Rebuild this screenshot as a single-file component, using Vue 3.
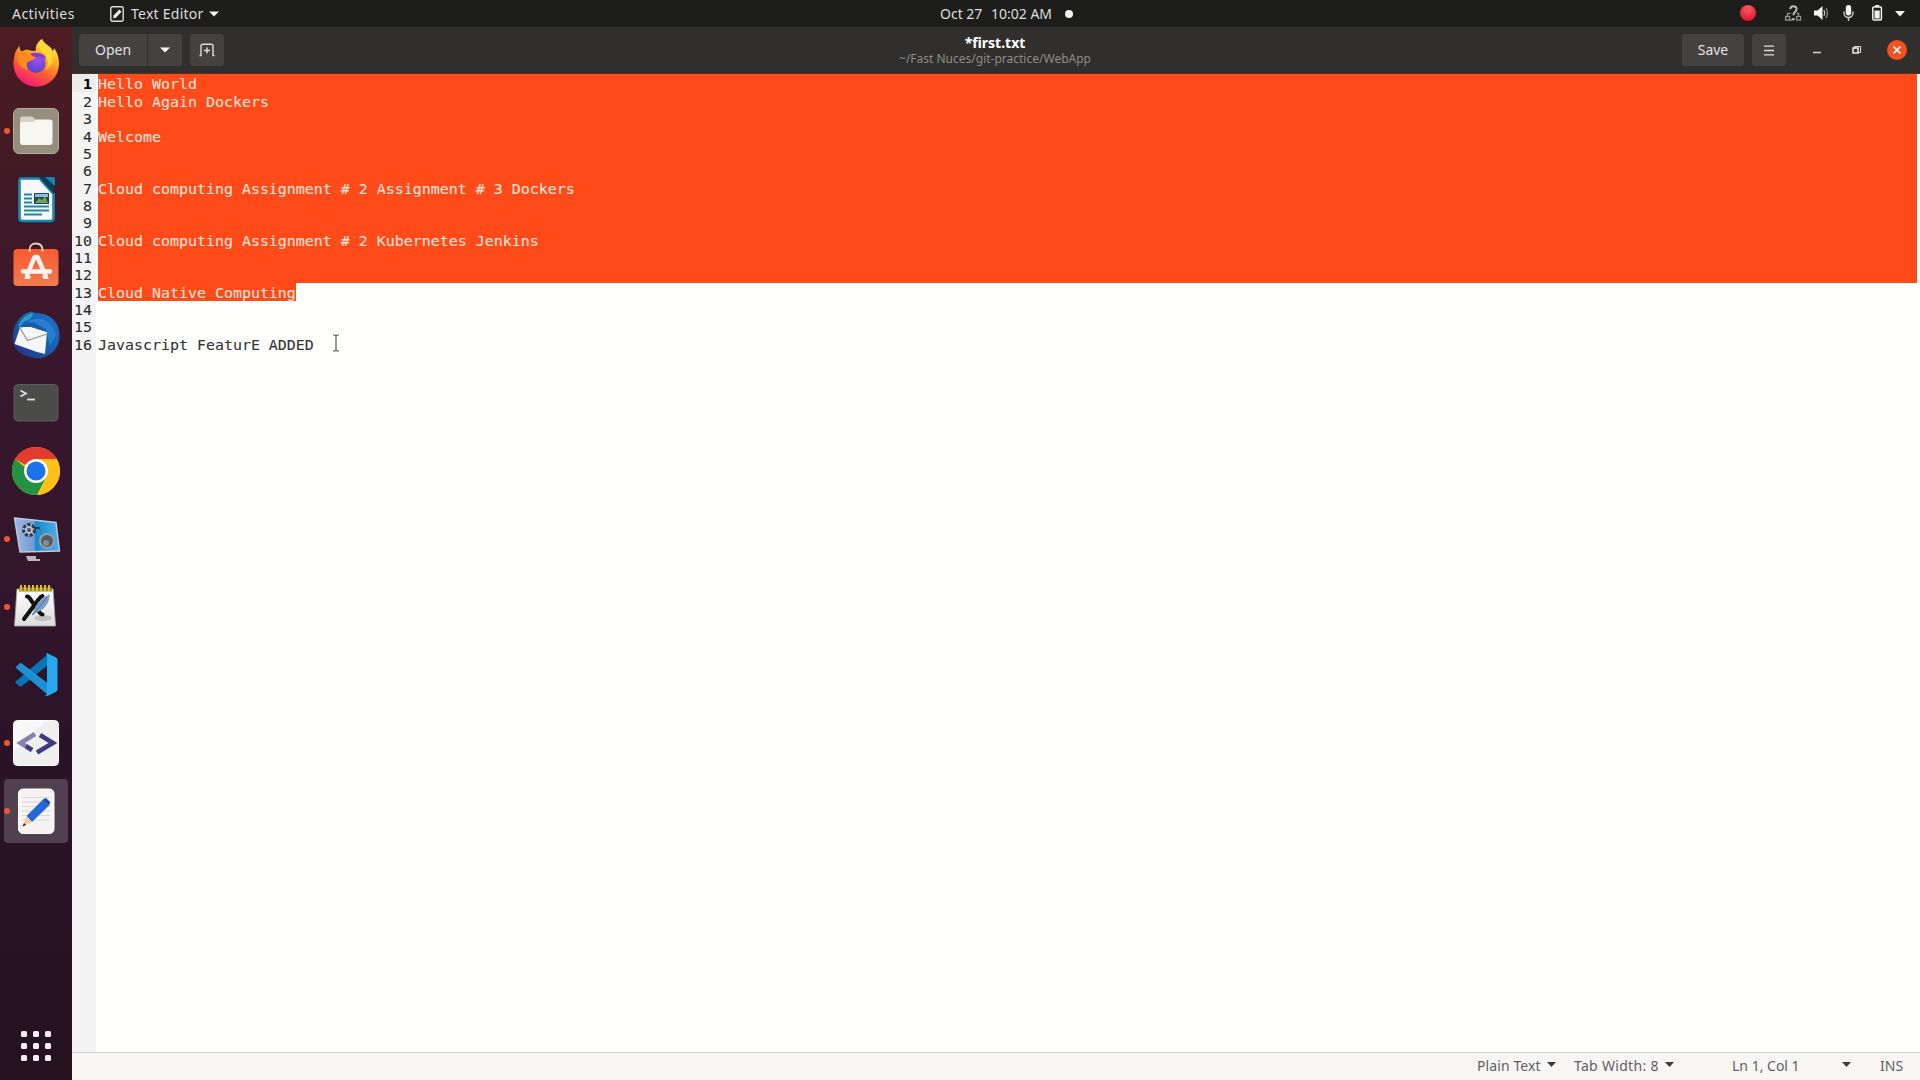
<script setup>
const lines = [
  { t: 'Hello World', s: true },
  { t: 'Hello Again Dockers', s: true },
  { t: '', s: true },
  { t: 'Welcome', s: true },
  { t: '', s: true },
  { t: '', s: true },
  { t: 'Cloud computing Assignment # 2 Assignment # 3 Dockers', s: true },
  { t: '', s: true },
  { t: '', s: true },
  { t: 'Cloud computing Assignment # 2 Kubernetes Jenkins', s: true },
  { t: '', s: true },
  { t: '', s: true },
  { t: 'Cloud Native Computing', s: false, part: true },
  { t: '' },
  { t: '' },
  { t: 'Javascript FeaturE ADDED' },
]
const spots = [0, 1, 2, 3, 4, 5, 6, 7, 8]
</script>

<template>
  <div class="desktop">
    <header class="topbar">
      <div class="top-left">
        <span class="activities">Activities</span>
        <svg class="app-icon" width="14" height="16" viewBox="0 0 14 16"><rect x=".8" y=".8" width="12.4" height="14.4" rx="1.6" fill="none" stroke="#ddd" stroke-width="1.4" /><path d="M3 12.4l.8-3.2 5.5-5.6 2.2 2.2-5.4 5.6z" fill="#eee" /></svg>
        <span class="app-name">Text Editor</span>
        <svg class="caret" width="10" height="6" viewBox="0 0 10 6"><path d="M0 .4h10L5 5.6z" fill="#eee" /></svg>
      </div>
      <div class="clock"><span class="date">Oct 27</span><span class="time">10:02 AM</span><i class="notify"></i></div>
      <div class="tray">
        <svg width="172" height="27" viewBox="0 0 172 27">
          <defs><radialGradient id="rec" cx=".5" cy=".25" r=".8"><stop offset="0" stop-color="#ff5a62" /><stop offset="1" stop-color="#d9102b" /></radialGradient></defs>
          <circle cx="8" cy="13" r="8" fill="url(#rec)" />
          <g fill="none" stroke="#8f8f8d" stroke-width="1.3"><rect x="45.6" y="16.5" width="4" height="3.6" /><rect x="56.6" y="16.5" width="4" height="3.6" /><path d="M47.5 16.5v-3h3M58.6 16.5v-3h-2M50 20h2" /></g>
          <path d="M50.3 9.2c0-4 6.3-4 6.3-.2 0 2.8-3.2 2.8-3.2 6.2" fill="none" stroke="#bbb" stroke-width="2" /><circle cx="53.3" cy="19.2" r="1.3" fill="#bbb" />
          <path d="M74 10.5h3.6l4.9-4.6v14.2l-4.9-4.600H74z" fill="#f3f3f3" />
          <g fill="none" stroke="#c9c9c9" stroke-width="1.3"><path d="M84 10.2q1.6 2.8 0 5.6" /><path d="M86 8q2.8 5 0 10" stroke="#888" /></g>
          <rect x="105.8" y="5" width="5.4" height="10.5" rx="2.7" fill="#f3f3f3" /><path d="M104 11.5v1.5a4.500 4.500 0 0 0 9 0v-1.500M108.500 17.500V21" fill="none" stroke="#ccc" stroke-width="1.4" />
          <rect x="132.8" y="7" width="8.6" height="13" rx="1" fill="none" stroke="#eee" stroke-width="1.5" /><rect x="135" y="5" width="4.2" height="2" fill="#eee" /><rect x="134.5" y="10.5" width="5.2" height="8" fill="#eee" />
          <path d="M155 11h10l-5 5.4z" fill="#eee" />
        </svg>
      </div>
    </header>

    <div class="body">
      <nav class="dock">
        <div class="cell">
          <svg viewBox="0 0 48 48"><defs>
            <linearGradient id="fx" x1=".8" y1="0" x2=".3" y2="1"><stop offset="0" stop-color="#fff044" /><stop offset=".35" stop-color="#ffb01f" /><stop offset=".65" stop-color="#ff5a35" /><stop offset="1" stop-color="#f0157e" /></linearGradient>
            <radialGradient id="fp" cx=".6" cy=".3" r=".8"><stop offset="0" stop-color="#a04df0" /><stop offset="1" stop-color="#4a46c8" /></radialGradient></defs>
            <path d="M1.500 25C1.500 17 3.500 11 7.500 7c0 3 1 5 2.500 5.500C13.500 9.500 17.500 11 20 12c2 0 3.500-.2 4-1C23 6 27 2 30 0c2 5 8 6 11 12 0 0 1-1.500 1-3 4 5 5 11 5 16a22.700 22.700 0 0 1-45.500 0z" fill="url(#fx)" />
            <circle cx="24" cy="24.500" r="9.500" fill="url(#fp)" />
            <path d="M6 13c4-2 10 1 13 3 2 2 5 1 5 2-1 3-5 3-8 5-2 1-2 5 0 8-5-1-10-5-11-11z" fill="#ff8a1d" />
            <path d="M18 15c4-2 11-2 15 2l1 4c-3-4-7-4-10-3-2 0-4-2-6-3z" fill="#8638db" />
            <path d="M30 0c-4 5-3 10 1 14 5 4 7 11 2 17 7-3 9-10 7-17C37 8 32 5 30 0z" fill="#ffdc37" opacity=".8" />
          </svg>
        </div>
        <div class="cell"><i class="run"></i>
          <svg viewBox="0 0 48 48"><rect x="1.500" y="1.500" width="45" height="45" rx="5.500" fill="#958e7d" stroke="#b3ac9d" /><path d="M8 12q0-2.500 2.500-2.500h9q1.500 0 2.500 1.500l1.500 2H38v6H8z" fill="#d8d0c6" /><path d="M8 17q0-2 2-2h11l3-2.500h14q2.500 0 2.500 2.500v20q0 3-3 3H11q-3 0-3-3z" fill="#f8f6f0" /></svg>
        </div>
        <div class="cell">
          <svg viewBox="0 0 48 48"><path d="M9 3.500h18.500L41.500 19v24q0 3-3 3h-28q-3 0-3-3V6q0-2.500 1.500-2.500z" fill="#f6f8f9" stroke="#1688b1" stroke-width="2.600" /><path d="M27 2h11l4 4v13z" fill="#0b3d56" /><path d="M33 2h7.500Q43 2 43 5v6z" fill="#1787b0" /><g stroke="#2187ad" stroke-width="2"><path d="M12 19.500h8M12 23.500h8M12 27.500h8M12 31.500h25M12 35.500h25M12 39.500h18" /></g><rect x="22" y="18" width="15" height="11" fill="#1b4660" /><path d="M23 28l4-5 3 2 3-4 3 7z" fill="#74a24a" /><path d="M23 19h13v3H23z" fill="#8bbdda" /></svg>
        </div>
        <div class="cell">
          <svg viewBox="0 0 48 48"><defs><linearGradient id="sw" x1="0" x2="0" y1="0" y2="1"><stop offset="0" stop-color="#fb5a31" /><stop offset="1" stop-color="#f17a50" /></linearGradient></defs><rect x="1.500" y="6" width="45" height="37" rx="4" fill="url(#sw)" /><path d="M17.500 9V7.500q0-7 6.500-7t6.500 7V9" fill="none" stroke="#ded4c4" stroke-width="1.800" /><path d="M14.500 34L22.500 14h3L34 34" fill="none" stroke="#fff4ed" stroke-width="4.500" stroke-linejoin="bevel" /><path d="M11 28.500h27" stroke="#fff4ed" stroke-width="4.500" stroke-linecap="round" /><path d="M12 36h6l1-3h-5zM30 33l1.500 3H37l-2-3z" fill="#fff4ed" /></svg>
        </div>
        <div class="cell">
          <svg viewBox="0 0 48 48"><defs><linearGradient id="tb" x1="1" x2="0" y1="0" y2="1"><stop offset="0" stop-color="#1f72d2" /><stop offset=".5" stop-color="#185dac" /><stop offset="1" stop-color="#292979" /></linearGradient></defs><path d="M2 18C5 7 14 1 20 .5l3 1.500C38 2 47.500 11 47.500 24.500 47.500 37 39 45 29 47.500 17 47 7 44 3 36 0 30 .5 23 2 18z" fill="url(#tb)" /><path d="M7 13q5-9 13-11l1 2-4 5q-7 1-10 9z" fill="#279dc4" /><path d="M15 11C26 3 40 9 44 24l-6 11-4-17-11-6z" fill="#267ed1" /><path d="M8 16.500l10-1 17 5.500-2 22-8-2L2.500 33z" fill="#f5f5f6" /><path d="M8 17l7.500 12.500L35 23" fill="none" stroke="#96969f" stroke-width="1.200" /><path d="M9 16q12-9 26 5l-16-5z" fill="#195aa7" /></svg>
        </div>
        <div class="cell">
          <svg viewBox="0 0 48 48"><rect x="2" y="5.500" width="44" height="36.500" rx="4" fill="#4b4b4a" stroke="#5e5d5c" /><path d="M8.500 11.500l5.500 3-5.500 3" fill="none" stroke="#ddd" stroke-width="1.800" /><path d="M15 20.500h8" stroke="#ddd" stroke-width="1.800" /></svg>
        </div>
        <div class="cell">
          <svg viewBox="0 0 48 48"><circle cx="24" cy="24" r="24" fill="#fbc116" /><path d="M24 24L3.200 12A24 24 0 0 1 44.800 12z" fill="#e33b2e" /><path d="M3.200 12A24 24 0 0 0 25 48L34.400 30H24z" fill="#229342" /><path d="M24 12h20.800A24 24 0 0 1 25 48l9.400-18z" fill="#fbc116" /><circle cx="24" cy="24" r="12" fill="#fff" /><circle cx="24" cy="24" r="9.500" fill="#1a73e8" /></svg>
        </div>
        <div class="cell"><i class="run"></i>
          <svg viewBox="0 0 48 48"><defs><linearGradient id="kz" x1="0" x2="1" y1="0" y2="0"><stop offset="0" stop-color="#a3b8e2" /><stop offset=".44" stop-color="#6f9bd6" /><stop offset=".47" stop-color="#168acf" /><stop offset="1" stop-color="#4cb0ee" /></linearGradient></defs><path d="M2.500 3L44 7.500 47.500 36 8 37z" fill="url(#kz)" stroke="#c4c8d9" stroke-width="1.400" /><circle cx="17" cy="15" r="6" fill="#b9c3d8" /><circle cx="17" cy="15" r="5.500" fill="none" stroke="#333846" stroke-width="3" stroke-dasharray="3.200 1.500" /><circle cx="17" cy="15" r="2" fill="#4c5364" /><path d="M22 13h6" stroke="#333846" stroke-width="2" /><circle cx="35" cy="26" r="8" fill="#9ba0a8" /><circle cx="35" cy="26" r="6" fill="#555c66" /><circle cx="34" cy="28" r="3" fill="#868c94" /><path d="M14 41h10v3h4v2H16z" fill="#b9b6bd" /></svg>
        </div>
        <div class="cell"><i class="run"></i>
          <svg viewBox="0 0 48 48"><defs><linearGradient id="xj" x1="0" x2="0" y1="0" y2="1"><stop offset="0" stop-color="#fff" /><stop offset="1" stop-color="#dcdcdc" /></linearGradient></defs><path d="M5 6h36l2.500 37h-41z" fill="url(#xj)" stroke="#aaa" stroke-width=".8" /><path d="M7 4.500h33v4H7z" fill="#99851c" /><path d="M8 5h32" stroke="#d5bd38" stroke-width="6" stroke-dasharray="2 2" /><ellipse cx="31" cy="35" rx="9" ry="3" fill="#aaa" opacity=".6" /><path d="M15 13.500q2 0 3.500 3L28 30q1 1.500 2.500 1.500M30.500 13q-2 .5-4 3.500L12 36" fill="none" stroke="#111" stroke-width="4" stroke-linecap="round" /><path d="M21 30q3-13 17-19-1 12-10 17-4 1-8 5z" fill="#789fc7" /><path d="M20 32q8-8 15-18" stroke="#4d739d" fill="none" /></svg>
        </div>
        <div class="cell">
          <svg viewBox="0 0 48 48"><path d="M3 31l4 4q1.500 1 3 0L36 14V3z" fill="#0873b5" /><path d="M3.500 16.500l4-4q1-1 2.500 0L36 32.500V44z" fill="#1d91d3" /><path d="M34 2.500q1-.5 2 0l8 4q1.500.8 1.500 2.500v29.500q0 1.500-1.500 2.300l-8 4q-2 .6-3.500-.8Q35 45 35 42V6q0-2.500-1-3.500z" fill="#27a7f0" /></svg>
        </div>
        <div class="cell"><i class="run"></i>
          <svg viewBox="0 0 48 48"><rect x="1.500" y="1.500" width="45" height="45" rx="4" fill="#f0efef" stroke="#fff" /><path d="M2 32V6q0-4 4-4h28z" fill="#fff" opacity=".55" /><path d="M23 15L8.500 24 20 31" fill="none" stroke="#8582b0" stroke-width="4.500" /><path d="M14 27l6 4.200" stroke="#403a7e" stroke-width="4.500" /><path d="M28 16l13 8-16 9.500" fill="none" stroke="#403a7e" stroke-width="4.500" /></svg>
        </div>
        <div class="cell active"><i class="run"></i>
          <svg viewBox="0 0 48 48"><rect x="6.500" y="2" width="35.500" height="44.500" rx="4.500" fill="#f5f4f3" stroke="#fff" /><path d="M10 10.500h28M10 15h28M10 19.500h28M10 24h28M10 28.500h28M10 33h28" stroke="#d9d8d7" /><path d="M14.500 29L31.500 12l6 6L20 35z" fill="#2467d9" /><path d="M31 12.500l3-1.500 4 4-.5 3z" fill="#174aa8" /><path d="M14.500 29l5.500 6-9 4z" fill="#f2c9a0" /><path d="M12 36l2 2-3.500 1.500z" fill="#222" /></svg>
        </div>
        <div class="apps"><i v-for="s in spots" :key="s"></i></div>
      </nav>

      <main class="window">
        <div class="headerbar">
          <div class="hb-left">
            <div class="split"><button class="btn open"><span>Open</span></button><button class="btn drop"><svg width="10" height="6" viewBox="0 0 10 6"><path d="M0 .4h10L5 5.6z" fill="#fff" /></svg></button></div>
            <button class="btn square"><svg width="16" height="14" viewBox="0 0 16 14"><path d="M.5 12.500H2V3q0-1.800 1.800-1.800h8.400Q14 1.200 14 3v9.500h1.500M8 4.500v6M5 7.500h6" fill="none" stroke="#ddd" stroke-width="1.400" /></svg></button>
          </div>
          <div class="titles"><div class="title"><span>*first.txt</span></div><div class="path"><span>~/Fast Nuces/git-practice/WebApp</span></div></div>
          <div class="hb-right">
            <button class="btn save"><span>Save</span></button>
            <button class="btn square menu"><svg width="10" height="11" viewBox="0 0 10 11"><path d="M0 1.200h10M0 5.500h10M0 9.800h10" stroke="#ddd" stroke-width="1.300" /></svg></button>
            <svg class="controls" width="108" height="32" viewBox="0 0 108 32"><path d="M1 18.500h8" stroke="#ccc" stroke-width="1.600" /><path d="M42.500 14.500v-2h6v6h-2" fill="none" stroke="#ccc" stroke-width="1.200" /><rect x="41" y="14" width="5" height="5" fill="none" stroke="#eee" stroke-width="1.500" /><circle cx="85" cy="16" r="10" fill="#f1511f" /><path d="M81.500 12.500l7 7M88.500 12.500l-7 7" stroke="#fff" stroke-width="1.700" /></svg>
          </div>
        </div>

        <div class="editor">
          <div v-for="(l, i) in lines" :key="i" class="line" :class="{ tall: l.t, current: i === 0 }">
            <span class="num">{{ i + 1 }}</span>
            <span class="code" :class="{ sel: l.s }"><span :class="{ part: l.part }">{{ l.t }}</span></span>
          </div>
          <div class="rest"></div>
          <svg class="ibeam" width="8" height="18" viewBox="0 0 8 18"><path d="M1 1h2l1 1 1-1h2M4 2v14M1 17h2l1-1 1 1h2" fill="none" stroke="#555" stroke-width="1.200" /></svg>
        </div>

        <footer class="status">
          <span class="st lang">Plain Text</span><i class="tri"></i>
          <span class="st tab">Tab Width: 8</span><i class="tri"></i>
          <span class="st pos">Ln 1, Col 1</span><i class="tri"></i>
          <span class="st ins">INS</span>
        </footer>
      </main>
    </div>
  </div>
</template>

<style>
body { margin: 0; overflow: hidden; }
</style>

<style scoped>
.desktop { width: 1920px; height: 1080px; display: flex; flex-direction: column; font-family: "Noto Sans", "Open Sans", sans-serif; overflow: hidden; background: #fff; }
.desktop * { box-sizing: border-box; }
.desktop span { white-space: pre; }
.topbar { height: 27px; flex: none; background: #1d1d1b; color: #dedddb; font-size: 14px; line-height: 27px; display: grid; grid-template-columns: 940px 1fr 180px; }
.top-left { display: flex; align-items: center; padding-left: 12px; }
.activities { width: 98px; letter-spacing: .45px; }
.app-icon { margin-right: 7px; }
.app-name { width: 78px; letter-spacing: .25px; }
.clock { display: flex; align-items: center; }
.date { width: 51px; }
.time { width: 74px; }
.notify { width: 8px; height: 8px; border-radius: 50%; background: #f4f4f4; }
.tray svg { display: block; }
.body { flex: 1; display: flex; min-height: 0; }
.dock { width: 72px; flex: none; padding: 4px 4px 0; display: flex; flex-direction: column; gap: 4px; background: linear-gradient(#4c1c21 0, #431a25 12%, #38172d 32%, #32152c 55%, #2a1326 70%, #24131f 100%); }
.cell { position: relative; height: 64px; flex: none; display: flex; align-items: center; justify-content: center; border-radius: 4px; }
.cell svg { width: 48px; height: 48px; display: block; overflow: visible; }
.cell.active { background: #51404f; }
.run { position: absolute; left: 0; top: 29px; width: 6px; height: 6px; border-radius: 50%; background: #f05430; }
.apps { margin: auto 0 19px 17px; display: grid; grid-template-columns: repeat(3, 6px); gap: 6px; }
.apps i { width: 6px; height: 6px; border-radius: 1.5px; background: #fbeefa; }
.window { flex: 1; display: flex; flex-direction: column; min-width: 0; }
.headerbar { height: 47px; flex: none; background: #302f2e; border-bottom: 1px solid #54301f; display: grid; grid-template-columns: 608px 630px 1fr; padding-top: 7px; }
.hb-left { display: flex; gap: 8px; padding-left: 7px; }
.split { display: flex; gap: 1px; }
.btn { border: 0; padding: 0; margin: 0; height: 32px; background: #444241; color: #e4e3e1; font: 14px "Noto Sans", sans-serif; border-radius: 4px; display: flex; align-items: center; justify-content: center; }
.btn span { margin-top: -1px; }
.open { width: 68px; border-radius: 4px 0 0 4px; }
.drop { width: 34px; border-radius: 0 4px 4px 0; }
.square { width: 34px; }
.save { width: 62px; }
.menu { margin-left: 8px; }
.hb-right { display: flex; justify-content: flex-end; }
.controls { margin-left: 26px; }
.titles { text-align: center; }
.title { color: #fff; font-weight: 700; font-size: 14px; line-height: 17px; }
.path { color: #8e8c89; font-size: 12px; line-height: 15px; }
.editor { flex: 1; min-height: 0; position: relative; display: flex; flex-direction: column; background: #fffffe; font: 14.95px "DejaVu Sans Mono", monospace; color: #363636; -webkit-text-stroke: .12px; }
.line { display: flex; height: 17px; line-height: 19px; flex: none; }
.line.tall { height: 18px; line-height: 21px; }
.num { width: 24px; padding-right: 4px; text-align: right; background: #f5f4f4; color: #2c2c2c; flex: none; }
.current .num { background: #ececea; color: #000; font-weight: 700; }
.code { flex: 1; margin-left: 2px; margin-right: 3px; }
.code.sel { background: #ff4b19; color: #ffe0d5; }
.part { display: inline-block; height: 18px; background: #ff4b19; color: #ffe0d5; }
.rest { flex: 1; width: 24px; background: #f5f4f4; }
.ibeam { position: absolute; left: 260px; top: 260px; }
.status { height: 28px; flex: none; background: #f7f6f5; border-top: 1px solid #d4d2d0; display: flex; align-items: center; padding: 0 0 2px 1405px; color: #626160; font-size: 14px; }
.tri { width: 9px; height: 5px; background: #3c3b3a; clip-path: polygon(0 0, 100% 0, 50% 100%); margin-top: -2px; }
.lang { width: 70px; letter-spacing: .1px; }
.tab { width: 91px; margin-left: 18px; letter-spacing: .3px; }
.pos { width: 110px; margin-left: 58px; }
.ins { margin-left: 29px; }
</style>
